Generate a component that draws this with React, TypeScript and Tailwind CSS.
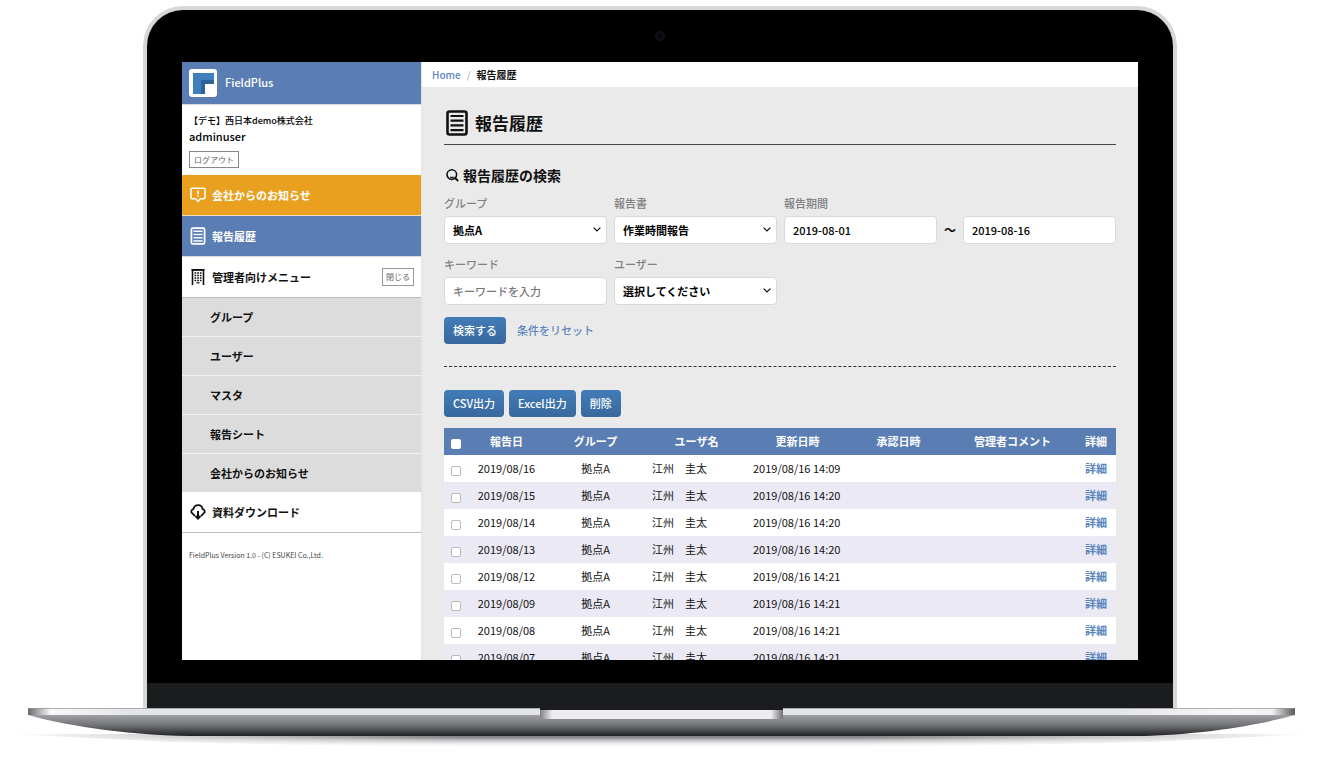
import React from "react";
import clsx from "clsx";

const SUB_MENU = ["グループ", "ユーザー", "マスタ", "報告シート", "会社からのお知らせ"];

const REPORTS = [
  { date: "2019/08/16", updated: "2019/08/16 14:09" },
  { date: "2019/08/15", updated: "2019/08/16 14:20" },
  { date: "2019/08/14", updated: "2019/08/16 14:20" },
  { date: "2019/08/13", updated: "2019/08/16 14:20" },
  { date: "2019/08/12", updated: "2019/08/16 14:21" },
  { date: "2019/08/09", updated: "2019/08/16 14:21" },
  { date: "2019/08/08", updated: "2019/08/16 14:21" },
  { date: "2019/08/07", updated: "2019/08/16 14:21" },
];

const CONTROL =
  "block h-7 w-full rounded border border-[#d9d9d9] bg-white px-2 text-[11px] text-black placeholder:font-medium placeholder:text-[#777]";

interface IconProps {
  className?: string;
}

const LogoIcon: React.FC<IconProps> = ({ className }) => (
  <svg viewBox="0 0 28 28" className={className} aria-hidden="true">
    <rect width="28" height="28" rx="3" fill="#fff" />
    <path d="M4 4h21v11h-9v10H4z" fill="#3f7fbd" />
    <path d="M12 11h13v4h-9v10h-4z" fill="#2c619b" />
  </svg>
);

const NoticeIcon: React.FC<IconProps> = ({ className }) => (
  <svg viewBox="0 0 16 16" className={className} fill="none" stroke="currentColor" strokeWidth="1.6" aria-hidden="true">
    <path d="M2 1.2h12a1 1 0 0 1 1 1v8.600a1 1 0 0 1-1 1h-3.600L8 14.300l-2.400-2.500H2a1 1 0 0 1-1-1V2.200a1 1 0 0 1 1-1z" />
    <path d="M8 3.500v3.700M8 8.300v1.400" strokeWidth="1.500" />
  </svg>
);

const ListIcon: React.FC<IconProps> = ({ className }) => (
  <svg viewBox="0 0 22 26" className={className} fill="none" stroke="currentColor" strokeWidth="2.600" aria-hidden="true">
    <rect x="1.500" y="1.500" width="19" height="23" rx="2" />
    <path d="M4.500 6h13M4.500 10.700h13M4.500 15.400h13M4.500 20.100h13" strokeWidth="2.200" />
  </svg>
);

const BuildingIcon: React.FC<IconProps> = ({ className }) => (
  <svg viewBox="0 0 14 16" className={className} fill="none" stroke="currentColor" aria-hidden="true">
    <path d="M1.500 16V1h11v15" strokeWidth="1.600" />
    <path d="M.5.800h13" strokeWidth="1.600" />
    <path d="M3.500 4h7M3.500 6.500h7M3.500 9h7M3.500 11.500h7" strokeWidth="1.600" strokeDasharray="1.700 1" />
    <path d="M5.500 13.800h3" strokeWidth="1.200" />
  </svg>
);

const CloudIcon: React.FC<IconProps> = ({ className }) => (
  <svg viewBox="0 0 16 16" className={className} fill="none" stroke="currentColor" strokeWidth="1.800" aria-hidden="true">
    <path d="M5.200 11.300H4.300L1.400 8.400a2.600 2.600 0 0 1 1.900-3.200C4 2.700 5.800 1.200 8 1.200s4.300 1.500 4.700 4a2.600 2.600 0 0 1 1.900 3.200l-2.900 2.900h-.9" />
    <path d="M8 7v7.500M5.400 11.900 8 14.600l2.600-2.700" strokeWidth="2" />
  </svg>
);

const SearchIcon: React.FC<IconProps> = ({ className }) => (
  <svg viewBox="0 0 13 13" className={className} fill="none" stroke="currentColor" aria-hidden="true">
    <circle cx="5.800" cy="5.600" r="4.800" strokeWidth="1.600" />
    <path d="M8.300 8.300 12.200 12" strokeWidth="1.900" />
    <path d="M4 8c1.200.6 2.500.6 3.600 0" strokeWidth="1.100" />
  </svg>
);

const ChevronIcon: React.FC<IconProps> = ({ className }) => (
  <svg viewBox="0 0 8 5" className={className} fill="none" stroke="currentColor" strokeWidth="1.200" aria-hidden="true">
    <path d="M.6.6 4 4 7.400.6" />
  </svg>
);

interface FieldProps {
  id: string;
  label: string;
  children: React.ReactNode;
}

const Field: React.FC<FieldProps> = ({ id, label, children }) => (
  <div>
    <label htmlFor={id} className="mb-[5px] block text-[11px] leading-4 font-medium text-[#808080]">
      {label}
    </label>
    {children}
  </div>
);

const Select: React.FC<{ id: string; value: string }> = ({ id, value }) => (
  <div className="relative">
    <select id={id} className={clsx(CONTROL, "appearance-none pr-6 font-bold")}>
      <option>{value}</option>
    </select>
    <ChevronIcon className="pointer-events-none absolute top-[11px] right-[6px] h-[5px] w-2" />
  </div>
);

const ActionButton: React.FC<{ children: React.ReactNode }> = ({ children }) => (
  <button
    type="button"
    className="h-[27px] rounded bg-linear-to-b from-[#427cb9] to-[#38689d] px-[9px] text-[11px] font-medium text-white"
  >
    {children}
  </button>
);

const Sidebar: React.FC = () => (
  <aside className="w-60 shrink-0 border-r border-[#e4e4e4] bg-white text-[11px] font-bold">
    <div className="flex h-[43px] items-center gap-2 border-b border-[#d5dce8] bg-[#5a7db3] px-[7px] text-white">
      <LogoIcon className="size-7" />
      <span className="pb-[2px] text-[11px] leading-4 font-medium">FieldPlus</span>
    </div>

    <div className="h-[70px] px-[7px] pt-2 font-medium text-black">
      <p className="text-[9px] leading-4">【デモ】西日本demo株式会社</p>
      <p className="text-[11px] leading-[14px]">adminuser</p>
      <button type="button" className="mt-2 block h-[17px] border border-[#888] px-1 text-[8px] font-normal text-[#666]">
        ログアウト
      </button>
    </div>

    <nav>
      <a href="#notice" className="flex h-[41px] items-center gap-[6px] border-b border-[#f3e0bd] bg-[#e8a01e] px-2 text-white">
        <NoticeIcon className="size-4" />
        会社からのお知らせ
      </a>
      <a href="#reports" className="flex h-[41px] items-center gap-[6px] border-b border-[#d5dce8] bg-[#5a7db3] px-2 text-white">
        <ListIcon className="h-[18px] w-4" />
        報告履歴
      </a>
      <div className="flex h-[41px] items-center gap-[6px] border-b border-[#bbb] pr-[7px] pl-2">
        <BuildingIcon className="h-4 w-4" />
        <span>管理者向けメニュー</span>
        <button type="button" className="ml-auto h-[18px] border border-[#999] px-[3px] text-[8px] font-normal text-[#666]">
          閉じる
        </button>
      </div>
      <ul>
        {SUB_MENU.map((item) => (
          <li key={item} className="border-b border-[#f2f2f2] bg-[#dcdcdc] last:border-b-0">
            <a href="#menu" className="flex h-[38px] items-center pl-7">
              {item}
            </a>
          </li>
        ))}
      </ul>
      <a href="#download" className="flex h-[41px] items-center gap-[6px] border-b border-[#bbb] px-2">
        <CloudIcon className="size-4" />
        資料ダウンロード
      </a>
    </nav>

    <p className="mt-4 px-[7px] text-[7px] leading-3 font-normal text-[#444]">
      FieldPlus Version 1.0 - (C) ESUKEI Co.,Ltd.
    </p>
  </aside>
);

const SearchForm: React.FC = () => (
  <form>
    <h2 className="mt-[19px] flex h-[22px] items-center gap-1 text-sm font-bold">
      <SearchIcon className="ml-[2px] size-[13px]" />
      報告履歴の検索
    </h2>
    <div className="mt-[9px] grid grid-cols-[163fr_163fr_332fr] gap-x-[7px] gap-y-3">
      <Field id="group" label="グループ">
        <Select id="group" value="拠点A" />
      </Field>
      <Field id="report" label="報告書">
        <Select id="report" value="作業時間報告" />
      </Field>
      <Field id="from" label="報告期間">
        <div className="flex items-center">
          <input id="from" type="text" defaultValue="2019-08-01" className={clsx(CONTROL, "min-w-0 flex-1 font-medium")} />
          <span className="w-[26px] text-center text-xs font-bold">～</span>
          <input
            aria-label="報告期間 終了日"
            type="text"
            defaultValue="2019-08-16"
            className={clsx(CONTROL, "min-w-0 flex-1 font-medium")}
          />
        </div>
      </Field>
      <Field id="keyword" label="キーワード">
        <input id="keyword" type="text" placeholder="キーワードを入力" className={CONTROL} />
      </Field>
      <Field id="user" label="ユーザー">
        <Select id="user" value="選択してください" />
      </Field>
    </div>
    <div className="mt-3 flex items-center gap-[11px]">
      <ActionButton>検索する</ActionButton>
      <a href="#reset" className="text-[11px] font-medium text-[#5a85bd]">
        条件をリセット
      </a>
    </div>
  </form>
);

const ReportTable: React.FC = () => (
  <table className="mt-[11px] w-full table-fixed border-collapse text-[11px]">
    <colgroup>
      <col className="w-6" />
      <col className="w-[77px]" />
      <col className="w-[101px]" />
      <col className="w-[101px]" />
      <col className="w-[101px]" />
      <col className="w-[101px]" />
      <col />
      <col className="w-10" />
    </colgroup>
    <thead>
      <tr className="h-[27px] bg-[#5a7db3] text-white">
        <th className="p-0">
          <input
            type="checkbox"
            aria-label="すべて選択"
            className="mx-auto mt-1 block size-[10px] appearance-none rounded-xs bg-white"
          />
        </th>
        {["報告日", "グループ", "ユーザ名", "更新日時", "承認日時", "管理者コメント", "詳細"].map((name) => (
          <th key={name} className="p-0 font-bold">
            {name}
          </th>
        ))}
      </tr>
    </thead>
    <tbody>
      {REPORTS.map((report) => (
        <tr key={report.date} className="h-[27px] bg-white even:bg-[#ebe9f4]">
          <td className="p-0">
            <input
              type="checkbox"
              aria-label={report.date}
              className="mx-auto mt-1 block size-[10px] appearance-none rounded-xs border border-[#bbb] bg-white"
            />
          </td>
          <td className="p-0 text-center">{report.date}</td>
          <td className="p-0 text-center">拠点A</td>
          <td className="px-[6px] py-0">江州　圭太</td>
          <td className="px-[6px] py-0 whitespace-nowrap">{report.updated}</td>
          <td />
          <td />
          <td className="p-0 text-center">
            <a href="#detail" className="font-bold text-[#5a85bd]">
              詳細
            </a>
          </td>
        </tr>
      ))}
    </tbody>
  </table>
);

const LaptopBase: React.FC = () => (
  <svg viewBox="0 0 1320 52" preserveAspectRatio="none" className="block h-[52px] w-full" aria-hidden="true">
    <defs>
      <linearGradient id="body" x1="0" y1="0" x2="0" y2="1">
        <stop offset="0" stopColor="#a0a1a4" />
        <stop offset="0.500" stopColor="#707174" />
        <stop offset="1" stopColor="#202123" />
      </linearGradient>
      <linearGradient id="edge">
        <stop offset="0" stopColor="#68696c" />
        <stop offset="0.018" stopColor="#f8f8f8" />
        <stop offset="0.080" stopColor="#e4e5e9" />
        <stop offset="0.860" stopColor="#e4e5e9" />
        <stop offset="0.955" stopColor="#f8f8f8" />
        <stop offset="0.982" stopColor="#f0f0f0" />
        <stop offset="1" stopColor="#58595b" />
      </linearGradient>
      <linearGradient id="notch">
        <stop offset="0" stopColor="#808184" />
        <stop offset="0.050" stopColor="#ededf1" />
        <stop offset="0.950" stopColor="#ededf1" />
        <stop offset="1" stopColor="#707174" />
      </linearGradient>
      <linearGradient id="drop" x1="0" y1="0" x2="0" y2="1">
        <stop offset="0" stopColor="#77787b" />
        <stop offset="0.250" stopColor="#88898c" />
        <stop offset="1" stopColor="#fff" stopOpacity="0" />
      </linearGradient>
      <linearGradient id="fade">
        <stop offset="0" stopColor="#000" />
        <stop offset="0.100" stopColor="#444" />
        <stop offset="0.350" stopColor="#fff" />
        <stop offset="0.650" stopColor="#fff" />
        <stop offset="0.900" stopColor="#444" />
        <stop offset="1" stopColor="#000" />
      </linearGradient>
      <mask id="sides">
        <rect width="1320" height="52" fill="url(#fade)" />
      </mask>
    </defs>
    <path d="M10 26H1310L1150 34Q660 46 170 34Z" fill="url(#drop)" mask="url(#sides)" />
    <path d="M28 7C60 16 120 27 190 28H1135C1205 27 1262 16 1295 7Z" fill="url(#body)" />
    <rect x="28" width="1267" height="7" fill="url(#edge)" />
    <rect x="28" width="1267" height="1" fill="#909194" opacity="0.700" />
    <rect x="540" width="243" height="3" fill="#1b1c1e" />
    <rect x="540" y="2" width="243" height="9" fill="url(#notch)" />
    <rect x="540" y="11" width="243" height="1" fill="#8a8b8e" />
  </svg>
);

export default function App() {
  return (
    <div className="overflow-hidden bg-white pt-[6px] font-['Noto_Sans_CJK_JP',sans-serif] text-[#111]">
      <div className="mx-[143px] overflow-hidden rounded-t-[40px] border-4 border-b-0 border-[#d6d7d7] bg-black">
        <div className="flex h-[52px] items-center justify-center">
          <span className="size-[10px] rounded-full border-2 border-[#111318] bg-[#07090c]" />
        </div>
        <div className="mx-[35px] flex h-[598px] overflow-hidden bg-[#eaeaea]">
          <Sidebar />
          <main className="min-w-0 flex-1">
            <nav className="flex h-[25px] items-center gap-[6px] bg-white px-[10px] text-[10px] font-medium">
              <a href="#home" className="text-[#5a85bd]">
                Home
              </a>
              <span className="font-normal text-[#aaa]">/</span>
              <span className="font-bold">報告履歴</span>
            </nav>
            <div className="px-[22px] pt-[22px]">
              <h1 className="flex h-9 items-center gap-[7px] border-b border-[#444] px-[2px] pb-[7px] text-[17px] font-bold">
                <ListIcon className="h-[26px] w-[22px]" />
                報告履歴
              </h1>
              <SearchForm />
              <hr className="mt-[22px] border-t border-dashed border-[#333]" />
              <div className="mt-[23px] flex gap-[5px]">
                <ActionButton>CSV出力</ActionButton>
                <ActionButton>Excel出力</ActionButton>
                <ActionButton>削除</ActionButton>
              </div>
              <ReportTable />
            </div>
          </main>
        </div>
        <div className="h-[23px]" />
        <div className="h-[25px] bg-[#1b1c1e]" />
      </div>
      <LaptopBase />
    </div>
  );
}
